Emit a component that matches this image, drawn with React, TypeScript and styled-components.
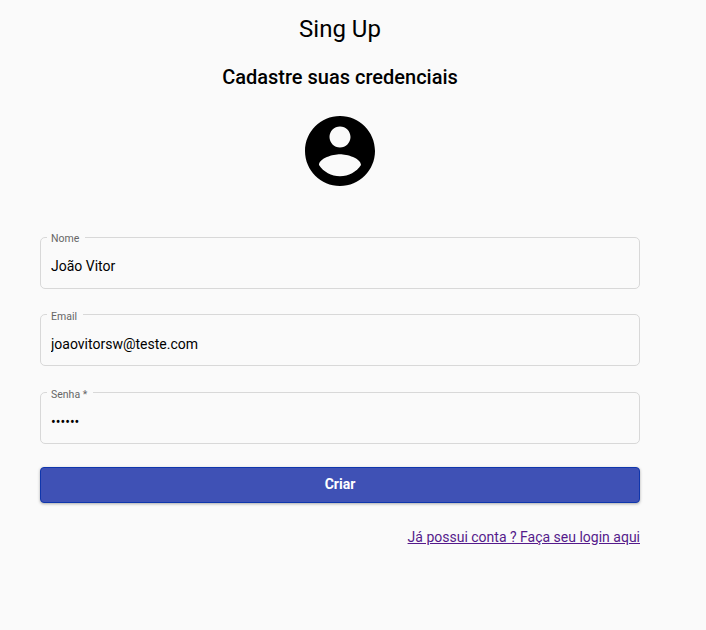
import React from "react";
import styled, { createGlobalStyle } from "styled-components";

const GlobalStyle = createGlobalStyle`
  * { box-sizing: border-box; }
  body {
    margin: 0;
    background: #fafafa;
    color: #000;
    font-family: Roboto, "Liberation Sans", sans-serif;
  }
`;

const Page = styled.main`
  width: 680px;
  height: 630px;
  padding: 13px 40px 0;
  display: flex;
  flex-direction: column;
  align-items: center;
`;

const Title = styled.h1`
  margin: 0;
  font-size: 24px;
  line-height: 32px;
  font-weight: 400;
`;

const Subtitle = styled.h2`
  margin: 16px 0 0;
  font-size: 20px;
  line-height: 32px;
  font-weight: 500;
`;

const Avatar = styled.svg`
  width: 84px;
  height: 84px;
  margin-top: 16px;
  fill: #000;
`;

const Form = styled.form`
  width: 100%;
  margin-top: 44px;
  display: flex;
  flex-direction: column;
`;

const Field = styled.div<{ $gap: number }>`
  position: relative;
  height: 52px;
  margin-bottom: ${(p) => p.$gap}px;
  border: 1px solid #d8d8d8;
  border-radius: 5px;
`;

const Label = styled.label<{ $top: number }>`
  position: absolute;
  left: 6px;
  top: ${(p) => p.$top}px;
  padding: 0 6px 0 4px;
  background: #fafafa;
  color: #666;
  font-size: 10.5px;
  line-height: 14px;
  font-weight: 400;
`;

const Input = styled.input<{ $shift: number }>`
  display: block;
  width: 100%;
  height: 50px;
  padding: ${(p) => p.$shift}px 10px 0;
  border: 0;
  outline: 0;
  background: transparent;
  color: #000;
  font: 400 14px Roboto, "Liberation Sans", sans-serif;
`;

const SubmitButton = styled.button`
  height: 36px;
  padding: 0 0 2px;
  border: 1px solid #0f36ac;
  border-radius: 4px;
  background: #3f51b5;
  color: #fff;
  font: 700 14px Roboto, "Liberation Sans", sans-serif;
  box-shadow: 0 1px 3px rgba(0, 0, 0, 0.32);
`;

const LoginLink = styled.a`
  align-self: flex-end;
  margin-top: 24px;
  color: #551a8b;
  font-size: 14px;
  line-height: 20px;
  font-weight: 400;
  text-decoration: underline;
`;

const fields = [
  { id: "nome", label: "Nome", value: "João Vitor", gap: 25, top: -6, shift: 5 },
  { id: "email", label: "Email", value: "joaovitorsw@teste.com", gap: 26, top: -5, shift: 7 },
  { id: "senha", label: "Senha *", value: "••••••", gap: 23, top: -5, shift: 8 },
];

export default function App() {
  return (
    <>
      <GlobalStyle />
      <Page>
        <Title>Sing Up</Title>
        <Subtitle>Cadastre suas credenciais</Subtitle>
        <Avatar viewBox="0 0 24 24" aria-hidden="true">
          <path d="M12 2C6.48 2 2 6.48 2 12s4.48 10 10 10 10-4.48 10-10S17.52 2 12 2zm0 3c1.66 0 3 1.34 3 3s-1.34 3-3 3-3-1.34-3-3 1.34-3 3-3zm0 14.2c-2.5 0-4.71-1.28-6-3.22.03-1.99 4-3.08 6-3.08 1.99 0 5.97 1.09 6 3.08-1.29 1.94-3.5 3.22-6 3.22z" />
        </Avatar>
        <Form onSubmit={(e) => e.preventDefault()}>
          {fields.map((f) => (
            <Field key={f.id} $gap={f.gap}>
              <Label htmlFor={f.id} $top={f.top}>{f.label}</Label>
              <Input id={f.id} defaultValue={f.value} $shift={f.shift} spellCheck={false} />
            </Field>
          ))}
          <SubmitButton type="submit">Criar</SubmitButton>
          <LoginLink href="#login">Já possui conta ? Faça seu login aqui</LoginLink>
        </Form>
      </Page>
    </>
  );
}
